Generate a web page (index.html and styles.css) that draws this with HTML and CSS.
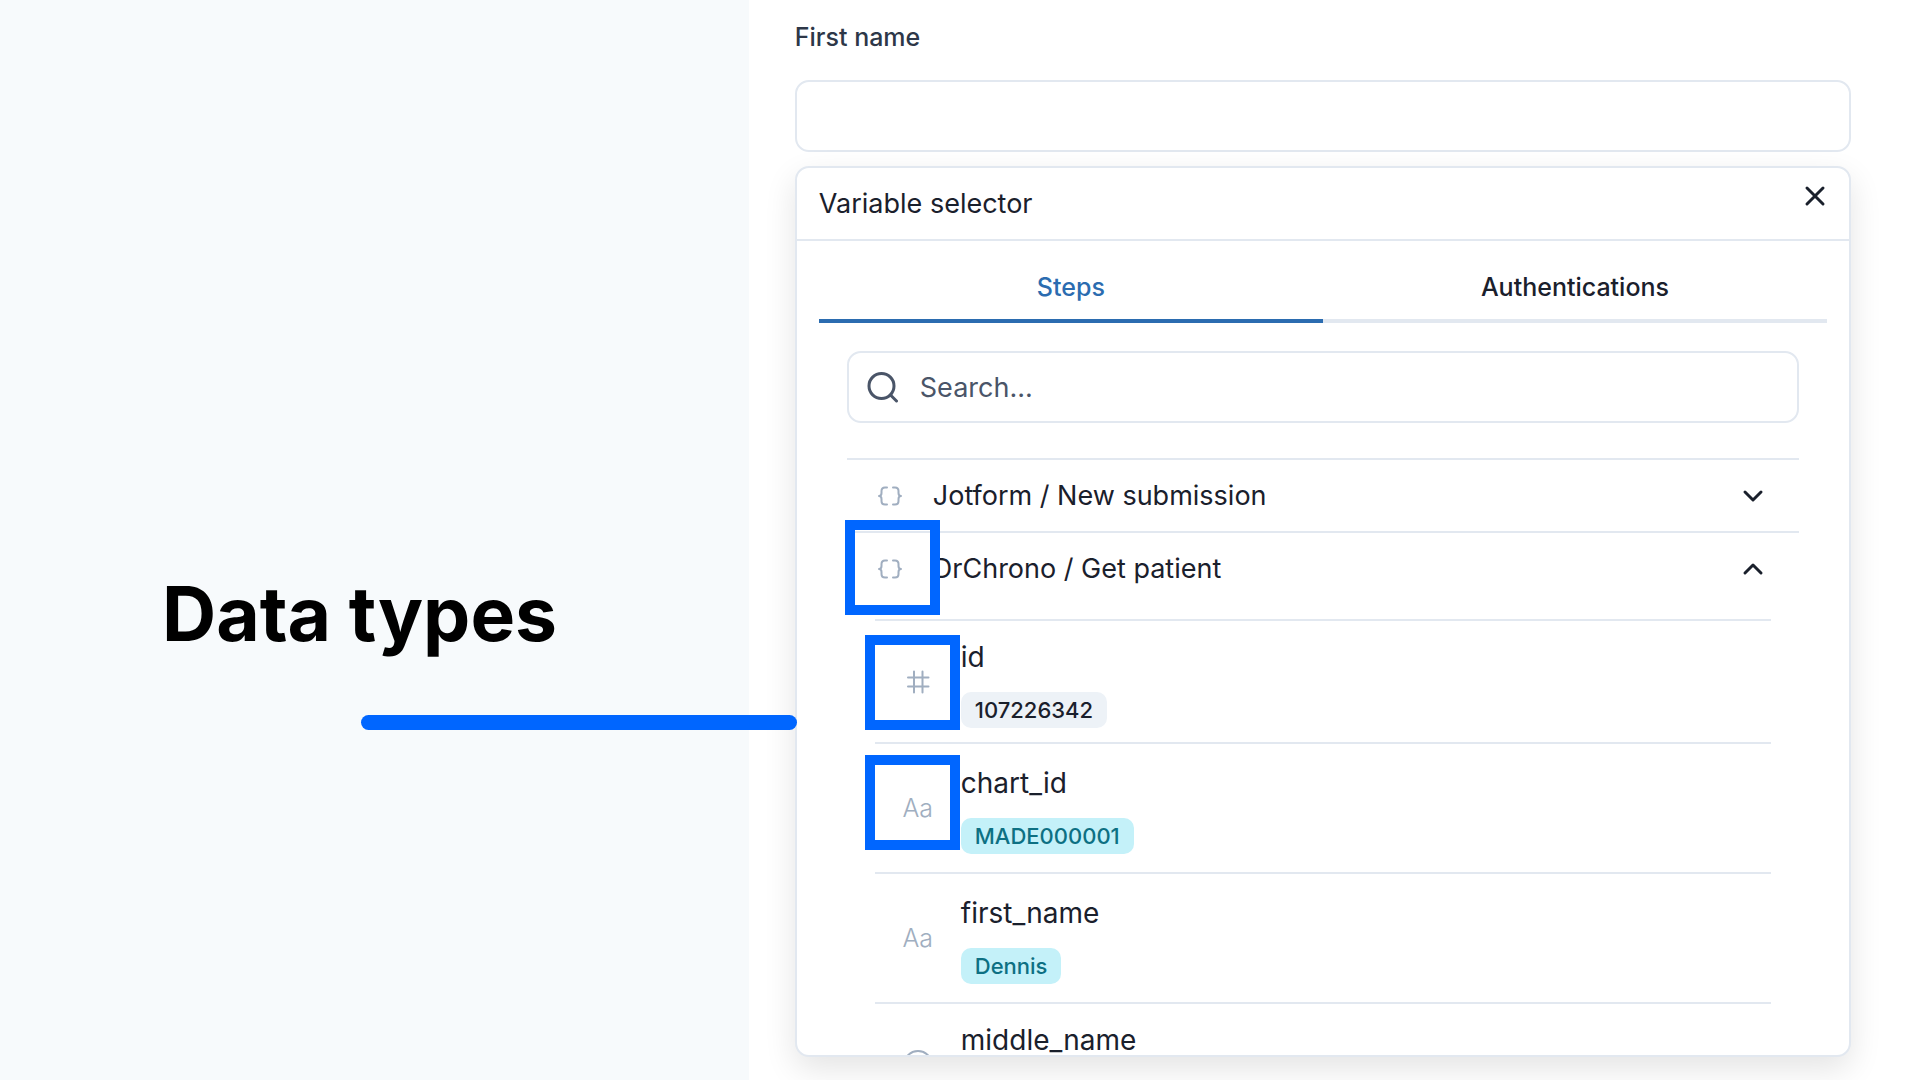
FILE: index.html
```html
<!DOCTYPE html>
<html lang="en">

<head>
    <meta charset="UTF-8">
    <meta name="viewport" content="width=device-width, initial-scale=1.0">
    <title>Data types</title>
    <link rel="stylesheet" href="styles.css">
</head>

<body>
    <aside class="callout">
        <h1>Data types</h1>
        <div class="pointer"></div>
    </aside>

    <main class="form">
        <label class="field-label" for="firstName">First name</label>
        <input class="field" type="text" id="firstName" name="firstName">

        <section class="selector">
            <header class="selector-header">
                <h2>Variable selector</h2>
                <button type="button" class="close" aria-label="Close">
                    <svg viewBox="0 0 24 24" width="24" height="24"><path d="M4 4 20 20M20 4 4 20" /></svg>
                </button>
            </header>

            <div class="tabs" role="tablist">
                <button type="button" class="tab active" role="tab" aria-selected="true">Steps</button>
                <button type="button" class="tab" role="tab" aria-selected="false">Authentications</button>
            </div>

            <div class="selector-body">
                <div class="search">
                    <svg viewBox="0 0 32 32" width="32" height="32"><circle cx="14.5" cy="15" r="12.5" /><path d="m23.5 24 6 6" /></svg>
                    <input type="text" placeholder="Search..." aria-label="Search">
                </div>

                <div class="steps">
                    <div class="step">
                        <button type="button" class="step-header" aria-expanded="false">
                            <svg class="type" viewBox="0 0 26 22" width="26" height="22"><path d="M10 2.500H8Q4.500 2.500 4.500 6V8Q4.500 11 2 11Q4.500 11 4.500 14V16Q4.500 19.500 8 19.500H10M16 2.500H18Q21.500 2.500 21.500 6V8Q21.500 11 24 11Q21.500 11 21.500 14V16Q21.500 19.500 18 19.500H16" /></svg>
                            <span>Jotform / New submission</span>
                            <svg class="chevron" viewBox="0 0 24 24" width="24" height="24"><path d="m4 8 8 8 8-8" /></svg>
                        </button>
                    </div>

                    <div class="step open">
                        <button type="button" class="step-header" aria-expanded="true">
                            <svg class="type" viewBox="0 0 26 22" width="26" height="22"><path d="M10 2.500H8Q4.500 2.500 4.500 6V8Q4.500 11 2 11Q4.500 11 4.500 14V16Q4.500 19.500 8 19.500H10M16 2.500H18Q21.500 2.500 21.500 6V8Q21.500 11 24 11Q21.500 11 21.500 14V16Q21.500 19.500 18 19.500H16" /></svg>
                            <span>DrChrono / Get patient</span>
                            <svg class="chevron" viewBox="0 0 24 24" width="24" height="24"><path d="m4 16 8-8 8 8" /></svg>
                        </button>
                        <div class="highlight"></div>

                        <ul class="variables">
                            <li class="compact">
                                <span class="kind"><svg viewBox="0 0 24 24" width="24" height="24"><path d="M8 1.500V22.500M16.500 1.500V22.500M2 7.500H22.500M2 16.500H22.500" /></svg></span>
                                <div class="variable">
                                    <p>id</p>
                                    <span class="badge number">107226342</span>
                                </div>
                                <div class="highlight"></div>
                            </li>
                            <li>
                                <span class="kind">Aa</span>
                                <div class="variable">
                                    <p>chart_id</p>
                                    <span class="badge">MADE000001</span>
                                </div>
                                <div class="highlight"></div>
                            </li>
                            <li>
                                <span class="kind">Aa</span>
                                <div class="variable">
                                    <p>first_name</p>
                                    <span class="badge">Dennis</span>
                                </div>
                            </li>
                            <li class="compact">
                                <span class="kind"><svg viewBox="0 0 30 30" width="30" height="30"><circle cx="15" cy="15" r="14" /></svg></span>
                                <div class="variable">
                                    <p>middle_name</p>
                                </div>
                            </li>
                        </ul>
                    </div>
                </div>
            </div>
        </section>
    </main>
</body>

</html>
```

FILE: styles.css
```css
* {
    box-sizing: border-box;
}

body {
    display: grid;
    grid-template-columns: 39fr 61fr;
    height: 100vh;
    margin: 0;
    overflow: hidden;
    background-color: #fff;
    color: #1a202c;
    font-family: Inter, "Liberation Sans", sans-serif;
    font-size: 27px;
}

h1, h2, p, ul {
    margin: 0;
    padding: 0;
}

button, input {
    font: inherit;
    color: inherit;
    background: none;
    border: none;
    padding: 0;
}

button {
    cursor: pointer;
}

svg {
    display: block;
    flex: none;
    fill: none;
    stroke: currentColor;
    stroke-width: 2;
    stroke-linecap: round;
    stroke-linejoin: round;
}

/* left side */
.callout {
    padding-top: 568px;
    background-color: #f7fafc;
}

.callout h1 {
    padding-left: 162px;
    color: #000;
    font-size: 75px;
    font-weight: 700;
    line-height: 92px;
}

.pointer {
    position: relative;
    z-index: 2;
    height: 15px;
    margin: 55px -48px 0 361px;
    border-radius: 8px;
    background-color: #06f;
}

/* form */
.form {
    display: flex;
    flex-direction: column;
    min-height: 0;
    padding: 20px 69px 23px 46px;
}

.field-label {
    margin-bottom: 26px;
    color: #2d3748;
    font-size: 25px;
    font-weight: 500;
    line-height: 34px;
}

.field,
.search {
    flex: none;
    height: 72px;
    border: 2px solid #e2e8f0;
    border-radius: 14px;
}

.field {
    padding: 0 24px;
}

.selector {
    flex: 1;
    min-height: 0;
    margin-top: 14px;
    overflow: hidden;
    border: 2px solid #e2e8f0;
    border-radius: 14px;
    background-color: #fff;
    box-shadow: 0 12px 32px rgba(0, 0, 0, 0.11);
}

.selector-header {
    display: flex;
    justify-content: space-between;
    height: 73px;
    padding: 0 22px;
    border-bottom: 2px solid #e2e8f0;
}

.selector-header h2 {
    font-size: 27px;
    font-weight: 400;
    line-height: 72px;
}

.close {
    height: 24px;
    margin-top: 16px;
}

.close svg {
    stroke-width: 3;
}

.tabs {
    display: flex;
    margin: 0 22px;
}

.tab {
    flex: 1;
    height: 82px;
    padding-top: 14px;
    border-bottom: 4px solid #e2e8f0;
    font-size: 25px;
    font-weight: 500;
}

.tab.active {
    border-color: #2b6cb0;
    color: #2b6cb0;
}

.selector-body {
    padding: 28px 50px 0;
}

.search {
    display: flex;
    align-items: center;
    gap: 21px;
    padding: 0 18px;
    color: #4a5568;
}

.search svg {
    stroke-width: 3;
}

.search input {
    flex: 1;
    outline: none;
}

.search input::placeholder {
    color: #4a5568;
    opacity: 1;
}

.steps {
    margin-top: 35px;
}

.step {
    position: relative;
    border-top: 2px solid #e2e8f0;
}

.step-header {
    display: flex;
    align-items: center;
    gap: 30px;
    width: 100%;
    height: 71px;
    padding: 0 34px 0 30px;
    text-align: left;
}

.step-header span {
    flex: 1;
}

.type {
    color: #a0aec0;
}

.chevron {
    stroke-width: 3;
}

.variables {
    margin: 15px 28px 0;
    list-style: none;
}

.variables li {
    position: relative;
    display: flex;
    align-items: center;
    gap: 28px;
    min-height: 123px;
    padding: 17px 28px 18px;
    border-top: 2px solid #e2e8f0;
}

.variables li.compact {
    padding-top: 14px;
    padding-bottom: 14px;
}

.variable {
    align-self: flex-start;
}

.variable p {
    margin-bottom: 13px;
    font-size: 28px;
    line-height: 44px;
}

.kind {
    display: flex;
    justify-content: center;
    width: 30px;
    color: #a0aec0;
    font-size: 25px;
    font-weight: 300;
}

.badge {
    display: block;
    width: fit-content;
    padding: 0 14px;
    border-radius: 10px;
    background-color: #c4f1f9;
    color: #0d7083;
    font-size: 22px;
    font-weight: 500;
    line-height: 36px;
}

.badge.number {
    background-color: #edf2f7;
    color: #1a202c;
}

/* blue frames around the type icons */
.highlight {
    position: absolute;
    top: -13px;
    left: -2px;
    width: 95px;
    height: 95px;
    border: 10px solid #06f;
}

.variables .highlight {
    top: 11px;
    left: -10px;
}

.variables .compact .highlight {
    top: 14px;
}
```
